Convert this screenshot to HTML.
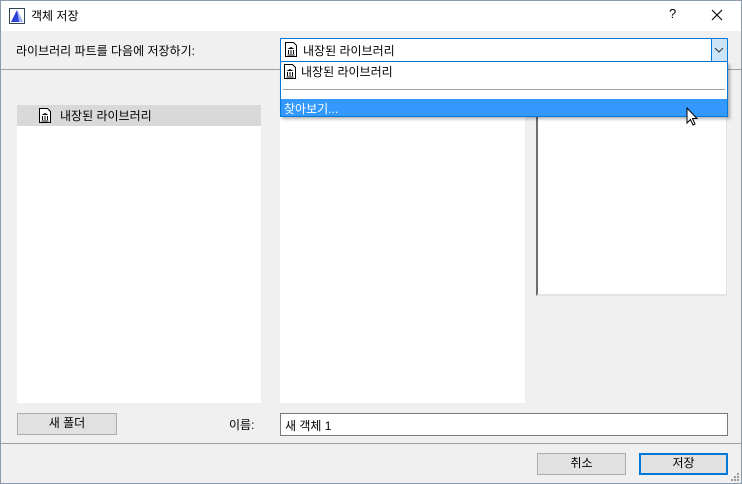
<!DOCTYPE html>
<html><head><meta charset="utf-8"><style>
*{box-sizing:border-box;margin:0;padding:0}
body{width:742px;height:484px;overflow:hidden;background:#f0f0f0;font-family:"Liberation Sans","Malgun Gothic","Noto Sans CJK KR",sans-serif;font-size:12px;color:#000;position:relative}
.a{position:absolute}
.win{position:absolute;left:0;top:0;width:742px;height:484px;border:1px solid #8a9aab}
.ico{width:12px;height:15px}
</style></head><body>
<div class="a" style="left:0;top:0;width:742px;height:31px;background:#fff"></div>
<svg class="a" style="left:9px;top:8px" width="16" height="16" viewBox="0 0 16 16"><rect x="0.5" y="0.5" width="15" height="15" fill="#fff" stroke="#345"/><path d="M2 14 L8 2 L14 14 Z" fill="#2d3fd6"/><path d="M8 2 L10 14 L14 14Z" fill="#9fb0ff"/></svg>
<div class="a" style="left:31px;top:7px;font-size:12px">객체 저장</div>
<div class="a" style="left:669px;top:6px;font-size:13px">?</div>
<svg class="a" style="left:711px;top:9px" width="12" height="12"><path d="M1 1L11 11M11 1L1 11" stroke="#000" stroke-width="1.1"/></svg>

<div class="a" style="left:16px;top:42px">라이브러리 파트를 다음에 저장하기:</div>
<div class="a" style="left:0;top:69px;width:742px;height:1px;background:#a0a0a0"></div>

<!-- left panel -->
<div class="a" style="left:17px;top:105px;width:244px;height:298px;background:#fff"></div>
<div class="a" style="left:17px;top:105px;width:244px;height:21px;background:#d9d9d9"></div>
<svg class="a ico" style="left:39px;top:108px" viewBox="0 0 12 15"><path d="M0.5 0.5H8.5L11.5 3.5V14.5H0.5Z" fill="#fff" stroke="#000"/><path d="M2.5 7L6 5L9.5 7ZM3 8h1v4H3zM5.5 8h1v4h-1zM8 8h1v4H8zM2.5 12.5h7v1h-7z" fill="#000"/></svg>
<div class="a" style="left:60px;top:107px">내장된 라이브러리</div>

<!-- middle -->
<div class="a" style="left:280px;top:110px;width:245px;height:293px;background:#fff"></div>
<!-- preview -->
<div class="a" style="left:536px;top:110px;width:191px;height:186px;background:#fff;border-left:2px solid #6d6d6d;border-right:1px solid #e3e3e3;border-bottom:2px solid #e3e3e3"></div>

<!-- combo -->
<div class="a" style="left:280px;top:38px;width:448px;height:24px;background:#fff;border:1px solid #0078d7"></div>
<div class="a" style="left:711px;top:39px;width:16px;height:22px;background:#cce4f7;border-left:1px solid #0078d7"></div>
<svg class="a" style="left:714px;top:46px" width="10" height="8"><path d="M1 2L5 6L9 2" stroke="#333" fill="none"/></svg>
<svg class="a ico" style="left:285px;top:42px" viewBox="0 0 12 15"><path d="M0.5 0.5H8.5L11.5 3.5V14.5H0.5Z" fill="#fff" stroke="#000"/><path d="M2.5 7L6 5L9.5 7ZM3 8h1v4H3zM5.5 8h1v4h-1zM8 8h1v4H8zM2.5 12.5h7v1h-7z" fill="#000"/></svg>
<div class="a" style="left:303px;top:42px">내장된 라이브러리</div>

<!-- dropdown -->
<div class="a" style="left:280px;top:62px;width:448px;height:55px;background:#fff;border:1px solid #0078d7;border-top:none;box-shadow:2px 2px 3px rgba(0,0,0,.3)"></div>
<svg class="a ico" style="left:284px;top:64px" viewBox="0 0 12 15"><path d="M0.5 0.5H8.5L11.5 3.5V14.5H0.5Z" fill="#fff" stroke="#000"/><path d="M2.5 7L6 5L9.5 7ZM3 8h1v4H3zM5.5 8h1v4h-1zM8 8h1v4H8zM2.5 12.5h7v1h-7z" fill="#000"/></svg>
<div class="a" style="left:301px;top:63px">내장된 라이브러리</div>
<div class="a" style="left:283px;top:89px;width:442px;height:1px;background:#a0a0a0"></div>
<div class="a" style="left:281px;top:99px;width:446px;height:17px;background:#3399ff"></div>
<div class="a" style="left:284px;top:100px;color:#fff">찾아보기...</div>
<svg class="a" style="left:686px;top:107px" width="14" height="20" viewBox="0 0 14 20"><path d="M1 1V16L4.5 12.5L7 18L9 17L6.5 11.5H11Z" fill="#fff" stroke="#000"/></svg>

<!-- bottom -->
<div class="a" style="left:17px;top:413px;width:100px;height:22px;background:#e1e1e1;border:1px solid #adadad;text-align:center;line-height:19px">새 폴더</div>
<div class="a" style="left:229px;top:416px">이름:</div>
<div class="a" style="left:280px;top:413px;width:448px;height:23px;background:#fff;border:1px solid #7a7a7a;padding:3px 4px">새 객체 1</div>
<div class="a" style="left:0;top:443px;width:742px;height:1px;background:#a0a0a0"></div>
<div class="a" style="left:537px;top:453px;width:89px;height:22px;background:#e1e1e1;border:1px solid #adadad;text-align:center;line-height:19px">취소</div>
<div class="a" style="left:639px;top:453px;width:89px;height:22px;background:#e1e1e1;border:2px solid #0078d7;text-align:center;line-height:17px">저장</div>
<svg class="a" style="left:731px;top:473px" width="9" height="9"><g fill="#999"><rect x="6" y="0" width="2" height="2"/><rect x="3" y="3" width="2" height="2"/><rect x="6" y="3" width="2" height="2"/><rect x="0" y="6" width="2" height="2"/><rect x="3" y="6" width="2" height="2"/><rect x="6" y="6" width="2" height="2"/></g></svg>
<div class="win"></div>
</body></html>
